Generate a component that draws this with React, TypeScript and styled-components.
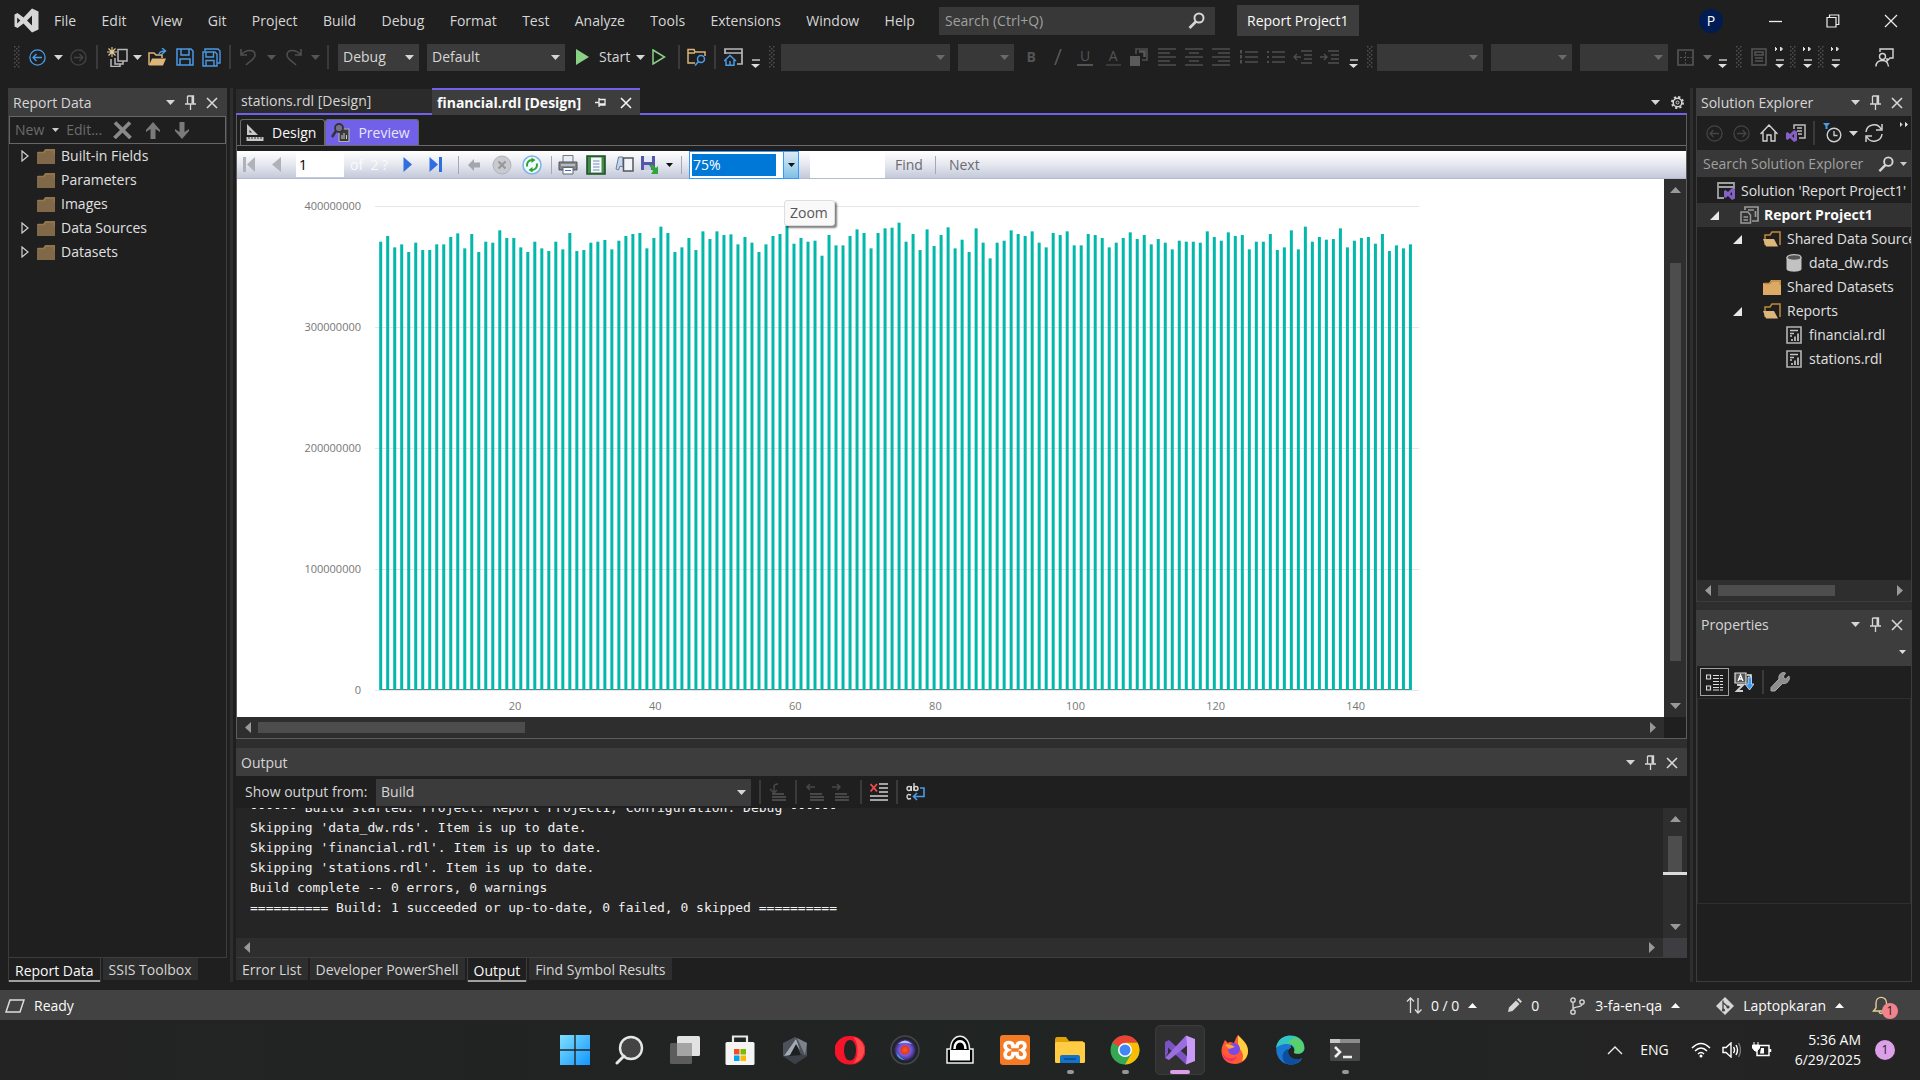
import React from 'react';
import styled, { createGlobalStyle, css } from 'styled-components';

const C = {
  bg: '#1f1f1f',
  header: '#3d3d3d',
  field: '#383838',
  line: '#3d3d3d',
  soft: '#2e2e2e',
  text: '#d6d6d6',
  purple: '#7160e8',
  teal: '#01b8aa',
};

const GlobalStyle = createGlobalStyle`
  * { box-sizing: border-box; }
  body { margin: 0; background: ${C.bg}; color: ${C.text}; font: 14px/20px "Open Sans", "Noto Sans", sans-serif; overflow: hidden; }
  button, input, select { font: inherit; color: inherit; margin: 0; padding: 0; border: 0; background: none; outline: 0; border-radius: 0; }
  svg { display: block; flex: none; }
`;

/* ---------- shared parts ---------- */

const Svg = styled.svg.attrs({ fill: 'none' })``;

const Glyph = ({ w = 18, h = w, vb = `0 0 ${w} ${h}`, children }: { w?: number; h?: number; vb?: string; children?: React.ReactNode }) => (
  <Svg width={w} height={h} viewBox={vb} aria-hidden>{children}</Svg>
);

const Caret = ({ c = C.text, up = false }: { c?: string; up?: boolean }) => (
  <Glyph w={9} h={5}><path d={up ? 'M0 5 L4.5 0 L9 5Z' : 'M0 0 H9 L4.5 5Z'} fill={c} /></Glyph>
);
const SmallCaret = ({ c = '#ddd' }: { c?: string }) => (
  <Glyph w={7} h={4}><path d="M0 0 H7 L3.5 4Z" fill={c} /></Glyph>
);

const Tool = styled.button<{ $w?: number }>`
  flex: none;
  display: flex;
  align-items: center;
  justify-content: center;
  width: ${(p) => p.$w ?? 27}px;
  height: 28px;
`;

const Divider = styled.span<{ $w?: number; $c?: string }>`
  flex: none;
  width: ${(p) => p.$w ?? 12}px;
  height: 24px;
  display: flex;
  justify-content: center;
  &::before { content: ''; width: 2px; background: ${(p) => p.$c ?? '#3a3a3a'}; }
`;

const ReportDivider = styled(Divider)`
  height: 18px;
  &::before { width: 1px; }
`;

const GripBox = styled.span`
  flex: none;
  width: 14px;
  display: flex;
  justify-content: center;
`;
const Grip = () => (
  <GripBox>
    <Glyph w={6} h={22}>
      {[0, 4, 8, 12, 16, 20].map((y) => <g key={y} fill="#4f4f4f"><rect x="0" y={y} width="1.5" height="1.5" /><rect x="4" y={y} width="1.5" height="1.5" /><rect x="2" y={y + 2} width="1.5" height="1.5" /></g>)}
    </Glyph>
  </GripBox>
);

const OverflowMark = ({ more = false, w = 14 }: { more?: boolean; w?: number }) => (
  <Tool $w={w} aria-label="Toolbar options">
    <Glyph w={9} h={22}>
      {more && <path d="M0 1 l2 2 l-2 2z M5.5 1 l2 2 l-2 2z" fill="#ddd" stroke="#ddd" />}
      <path d="M1 14 H9" stroke="#ddd" strokeWidth="1.3" /><path d="M0 18 H9 L4.5 22Z" fill="#ddd" />
    </Glyph>
  </Tool>
);

const ComboBox = styled.label<{ $w: number; $ml?: number; $off?: boolean }>`
  flex: none;
  display: grid;
  align-items: center;
  width: ${(p) => p.$w}px;
  height: 27px;
  margin-left: ${(p) => p.$ml ?? 8}px;
  background: ${(p) => (p.$off ? '#383838' : '#3b3b3b')};
  & > * { grid-area: 1 / 1; }
  & > svg { justify-self: end; margin-right: 5px; pointer-events: none; }
`;
const PlainSelect = styled.select`
  appearance: none;
  width: 100%;
  height: 100%;
  padding: 0 5px;
`;
const Combo = ({ w, ml, off, label, value = '' }: { w: number; ml?: number; off?: boolean; label: string; value?: string }) => (
  <ComboBox $w={w} $ml={ml} $off={off}>
    <PlainSelect aria-label={label} disabled={off} defaultValue={value}><option value={value}>{value}</option></PlainSelect>
    <Caret c={off ? '#6a6a6a' : C.text} />
  </ComboBox>
);

const Pin = () => (
  <Glyph w={11} h={15}><path d="M2.5 1 H8.5 V8.5 M2.5 1 V8.5 M0 9 H11 M5.5 9 V15" stroke={C.text} strokeWidth="1.3" /><path d="M6.5 1 H8.5 V8.5 H6.5Z" fill={C.text} /></Glyph>
);
const Cross = ({ c = C.text, s = 12 }: { c?: string; s?: number }) => (
  <Glyph w={s} vb="0 0 12 12"><path d="M1 1 L11 11 M11 1 L1 11" stroke={c} strokeWidth="1.6" /></Glyph>
);

const PanelHead = styled.header`
  flex: none;
  display: flex;
  align-items: center;
  height: 28px;
  padding: 1px 5px 0;
  background: ${C.header};
`;
const PanelTitle = styled.h2`
  flex: 1;
  margin: 0;
  font-size: 14px;
  font-weight: 400;
  white-space: nowrap;
`;
const Header = ({ title }: { title: string }) => (
  <PanelHead>
    <PanelTitle>{title}</PanelTitle>
    <Tool $w={20} aria-label="Window position"><Caret /></Tool>
    <Tool $w={21} aria-label="Auto hide"><Pin /></Tool>
    <Tool $w={21} aria-label="Close"><Cross /></Tool>
  </PanelHead>
);

const Splitter = styled.div<{ $flat?: number }>`
  flex: none;
  background: #2e2e2e;
  ${(p) => (p.$flat ? css`height: ${p.$flat}px;` : css`width: 3px; margin: 0 3px;`)}
`;

/* ---------- scroll bars ---------- */

const Track = styled.div<{ $side?: boolean; $size: number }>`
  flex: none;
  display: flex;
  align-items: center;
  background: ${C.soft};
  padding: ${(p) => (p.$side ? '8px 0' : '0 8px')};
  flex-direction: ${(p) => (p.$side ? 'column' : 'row')};
  ${(p) => (p.$side ? css`width: ${p.$size}px;` : css`height: ${p.$size}px;`)}
`;
const Rail = styled.div<{ $side?: boolean }>`
  flex: 1;
  display: flex;
  flex-direction: ${(p) => (p.$side ? 'column' : 'row')};
  align-items: center;
  align-self: stretch;
  min-width: 0;
  min-height: 0;
`;
const Space = styled.span<{ $n: number }>`flex: ${(p) => p.$n} 1 0;`;
const Thumb = styled.span<{ $n: number; $side?: boolean; $t?: number }>`
  flex: ${(p) => p.$n} 1 0;
  background: #4d4d4d;
  ${(p) => (p.$side ? css`width: ${p.$t ?? 11}px;` : css`height: 11px;`)}
`;
const Arrow = ({ d }: { d: 'l' | 'r' | 'u' | 'd' }) => {
  const side = d === 'l' || d === 'r';
  const path = { l: 'M6 0 V11 L0 5.5Z', r: 'M0 0 V11 L6 5.5Z', u: 'M0 6 H11 L5.5 0Z', d: 'M0 0 H11 L5.5 6Z' }[d];
  return <Glyph w={side ? 6 : 11} h={side ? 11 : 6}><path d={path} fill="#999" /></Glyph>;
};

/* ---------- title bar ---------- */

const Page = styled.div`
  display: flex;
  flex-direction: column;
  height: 100vh;
  overflow: hidden;
`;
const TitleBar = styled.header`
  flex: none;
  display: flex;
  align-items: center;
  height: 41px;
  padding-left: 14px;
`;
const Menu = styled.nav`
  display: flex;
  flex: none;
  justify-content: space-between;
  width: 861px;
  margin: 0 24px 0 15px;
`;
const MenuItem = styled.button`white-space: nowrap;`;
const SearchBox = styled.label`
  display: flex;
  align-items: center;
  flex: none;
  width: 276px;
  height: 28px;
  padding: 0 10px 0 6px;
  background: ${C.field};
  & input { flex: 1; min-width: 0; }
  & input::placeholder { color: #a0a0a0; opacity: 1; }
`;
const Magnifier = ({ s = 17 }: { s?: number }) => (
  <Glyph w={s} vb="0 0 17 17"><circle cx="11" cy="6" r="4.5" stroke={C.text} strokeWidth="2" /><path d="M8 9.5 L1.5 16" stroke={C.text} strokeWidth="2.6" /></Glyph>
);
const ProjectChip = styled.h1`
  margin: 0 0 0 22px;
  padding: 6px 10px 5px;
  height: 31px;
  background: ${C.header};
  color: #fafafa;
  font-size: 14px;
  font-weight: 400;
  white-space: nowrap;
`;
const WindowButtons = styled.div`
  margin-left: auto;
  display: flex;
  align-items: center;
`;
const Avatar = styled.button`
  width: 24px;
  height: 24px;
  margin-right: 23px;
  border-radius: 50%;
  background: #001c52;
  color: #fff;
`;

const VsLogo = () => (
  <Glyph w={25} h={25}><path fillRule="evenodd" d="M18 0.5 L24.5 3.5 V21.5 L18 24.5 L9.5 15.5 L3.5 20 L0.5 18.5 V6.5 L3.5 5 L9.5 9.5Z M18 7.5 L13 12.5 L18 17.5Z M3.2 9.5 V15.5 L6.3 12.5Z" fill="#d6d6d6" /></Glyph>
);

const MENU = ['File', 'Edit', 'View', 'Git', 'Project', 'Build', 'Debug', 'Format', 'Test', 'Analyze', 'Tools', 'Extensions', 'Window', 'Help'];

const Title = () => (
  <TitleBar>
    <VsLogo />
    <Menu>{MENU.map((m) => <MenuItem key={m}>{m}</MenuItem>)}</Menu>
    <SearchBox><input aria-label="Search" placeholder="Search (Ctrl+Q)" /><Magnifier /></SearchBox>
    <ProjectChip>Report Project1</ProjectChip>
    <WindowButtons>
      <Avatar>P</Avatar>
      <Tool $w={58} aria-label="Minimize"><Glyph w={13}><path d="M0 7.5 H13" stroke="#eee" strokeWidth="1.3" /></Glyph></Tool>
      <Tool $w={58} aria-label="Restore"><Glyph w={14}><path d="M1 3.5 H10 V13 H1Z M3.5 3.5 V1 H12.8 V10.5 H10" stroke="#eee" strokeWidth="1.2" /></Glyph></Tool>
      <Tool $w={58} aria-label="Close window"><Glyph w={14}><path d="M1 1 L13 13 M13 1 L1 13" stroke="#eee" strokeWidth="1.2" /></Glyph></Tool>
    </WindowButtons>
  </TitleBar>
);

/* ---------- main toolbar ---------- */

const ToolRow = styled.div`
  flex: none;
  display: flex;
  align-items: center;
  height: 32px;
  padding-left: 10px;
`;
const StartLabel = styled.button`
  flex: none;
  display: flex;
  align-items: center;
  gap: 10px;
  padding-left: 10px;
  & svg:last-child { margin-left: -4px; }
`;
const Push = styled.span`margin-left: auto;`;

const NavArrow = ({ c, right = false, s = 17 }: { c: string; right?: boolean; s?: number }) => (
  <Glyph w={s} vb="0 0 17 17"><circle cx="8.5" cy="8.5" r="7.6" stroke={c} strokeWidth="1.3" /><path d={right ? 'M4 8.5 H13 M9.5 5 L13 8.5 L9.5 12' : 'M13 8.5 H4 M7.5 5 L4 8.5 L7.5 12'} stroke={c} strokeWidth="1.3" /></Glyph>
);
const Lines = ({ rows }: { rows: number[][] }) => (
  <Glyph w={19} h={18}>{rows.map(([a, b], i) => <path key={i} d={`M${a} ${1 + i * 4} H${b}`} stroke="#4f4f4f" strokeWidth="1.5" />)}</Glyph>
);
const ListLines = ({ dots = false }: { dots?: boolean }) => (
  <Glyph w={19} h={14}>{[2, 7, 12].map((y) => <g key={y}><path d={`M6 ${y} H19`} stroke="#4f4f4f" strokeWidth="1.5" /><rect x="1" y={y - (dots ? 1 : 2)} width="2" height={dots ? 2 : 3.5} fill="#4f4f4f" /></g>)}</Glyph>
);
const Indent = ({ right = false }: { right?: boolean }) => (
  <Glyph w={19} h={14}><path d="M8 1 H19 M11 5 H19 M11 9 H19 M8 13 H19" stroke="#4f4f4f" strokeWidth="1.5" /><path d={right ? 'M0 7 H7 M4 4 L7 7 L4 10' : 'M8 7 H1 M4 4 L1 7 L4 10'} stroke="#4f4f4f" strokeWidth="1.3" /></Glyph>
);
const Letter = styled.span<{ $k: 'b' | 'u' | 'a' }>`
  color: #545454;
  line-height: 16px;
  ${(p) => p.$k === 'b' && css`font-weight: 700;`}
  ${(p) => p.$k !== 'b' && css`padding: 0 3px; border-bottom: 2px solid ${p.$k === 'a' ? '#3a3a3a' : '#545454'};`}
`;

const MainToolbar = () => (
  <ToolRow>
    <Grip />
    <Tool $w={26} aria-label="Back"><NavArrow c="#4a9be8" /></Tool>
    <Tool $w={16} aria-label="Back history"><Caret /></Tool>
    <Tool $w={24} aria-label="Forward"><NavArrow c="#444" right /></Tool>
    <Divider $w={14} />
    <Tool $w={26} aria-label="New project">
      <Glyph w={21} h={20}><path d="M5 0 V10 M0 5 H10 M1.5 1.5 L8.5 8.5 M8.5 1.5 L1.5 8.5" stroke="#e8cf98" strokeWidth="1.1" /><path d="M11 2.5 H20 V14 H11Z M8 11 V17 H16 V14 M4 12 V19.5 H13 V17" stroke="#b8b8b8" strokeWidth="1.5" /></Glyph>
    </Tool>
    <Tool $w={14} aria-label="New options"><Caret /></Tool>
    <Tool aria-label="Open">
      <Glyph w={19} h={19}><path d="M1 17 V5 H6 L8 7 H14 V10" stroke="#dcb679" strokeWidth="1.5" /><path d="M1 17.5 L4 10.5 H18 L15 17.5Z" fill="#dcb679" /><path d="M11 7 Q11 3 17 3 M14 0 L17.5 3 L14 6" stroke="#4a9be8" strokeWidth="1.5" /></Glyph>
    </Tool>
    <Tool aria-label="Save"><Glyph><path d="M1 1 H15 L17 3 V17 H1Z M5 1 V7 H13 V1 M4 17 V11 H14 V17" stroke="#4a9be8" strokeWidth="1.5" /></Glyph></Tool>
    <Tool $w={26} aria-label="Save all"><Glyph w={19}><path d="M3 3 V1 H16 L18 3 V15 H15.5" stroke="#4a9be8" strokeWidth="1.4" /><path d="M1 4 H13 L15 6 V18 H1Z M4 4 V9 H11.5 V4 M4 18 V12.5 H12 V18" stroke="#4a9be8" strokeWidth="1.4" /></Glyph></Tool>
    <Divider />
    <Tool $w={24} aria-label="Undo"><Glyph w={17} h={18}><path d="M1 1 V7 H7 M1 7 C6 1 15 1 15 7 C15 11 10 13 6 17" stroke="#4f4f4f" strokeWidth="1.6" /></Glyph></Tool>
    <Tool $w={22} aria-label="Undo history"><Caret c="#555" /></Tool>
    <Tool $w={22} aria-label="Redo"><Glyph w={17} h={18}><path d="M16 1 V7 H10 M16 7 C11 1 2 1 2 7 C2 11 7 13 11 17" stroke="#4f4f4f" strokeWidth="1.6" /></Glyph></Tool>
    <Tool $w={22} aria-label="Redo history"><Caret c="#555" /></Tool>
    <Divider $w={4} />
    <Combo w={81} ml={8} label="Solution configuration" value="Debug" />
    <Combo w={138} label="Solution platform" value="Default" />
    <StartLabel><Glyph w={14} h={16}><path d="M1 0 L14 8 L1 16Z" fill="#89d185" /></Glyph>Start<Caret /></StartLabel>
    <Tool $w={28} aria-label="Start without debugging"><Glyph w={14} h={16}><path d="M1 1 L12.5 8 L1 15Z" stroke="#89d185" strokeWidth="1.5" /></Glyph></Tool>
    <Divider />
    <Tool $w={24} aria-label="Find in files"><Glyph w={20} h={18}><path d="M8 15 H1 V1.5 H7 L8 4 H18 V8 M1 5 H8" stroke="#dcb679" strokeWidth="1.5" /><circle cx="14" cy="11" r="3.5" stroke="#4a9be8" strokeWidth="1.5" /><path d="M11.5 13.5 L8 17.5" stroke="#4a9be8" strokeWidth="1.6" /></Glyph></Tool>
    <Divider />
    <Tool $w={24} aria-label="Start window"><Glyph w={19} h={18}><path d="M1 6 V1 H18 V16 H13 M1 5 H18" stroke="#b8b8b8" strokeWidth="1.7" /><path d="M0 13 L6 7.5 L12 13 M2 12 V17.3 H10 V12 M6 17 V13" stroke="#4a9be8" strokeWidth="1.5" /></Glyph></Tool>
    <OverflowMark w={20} />
    <Grip />
    <Combo w={169} ml={2} off label="Font name" />
    <Combo w={56} off label="Font size" />
    <Tool $w={34} aria-label="Bold"><Letter $k="b">B</Letter></Tool>
    <Tool $w={20} aria-label="Italic"><Glyph w={8} h={16}><path d="M7 0 L1 16" stroke="#545454" strokeWidth="1.8" /></Glyph></Tool>
    <Tool $w={34} aria-label="Underline"><Letter $k="u">U</Letter></Tool>
    <Tool $w={22} aria-label="Foreground color"><Letter $k="a">A</Letter></Tool>
    <Tool $w={30} aria-label="Background color"><Glyph w={18}><path d="M0 8 H10 V18 H0Z" fill="#5a5a5a" /><path d="M6 6 V1 H17 V12 H12" stroke="#4f4f4f" strokeWidth="1.6" /><path d="M9 3.5 H14.5 V9" stroke="#5a5a5a" strokeWidth="2.5" /></Glyph></Tool>
    <Tool aria-label="Align left"><Lines rows={[[0, 18], [0, 12], [0, 18], [0, 12], [0, 18]]} /></Tool>
    <Tool aria-label="Align center"><Lines rows={[[0, 18], [4, 14], [0, 18], [4, 14], [0, 18]]} /></Tool>
    <Tool aria-label="Align right"><Lines rows={[[0, 18], [6, 18], [0, 18], [6, 18], [0, 18]]} /></Tool>
    <Tool aria-label="Numbered list"><ListLines /></Tool>
    <Tool aria-label="Bulleted list"><ListLines dots /></Tool>
    <Tool aria-label="Decrease indent"><Indent /></Tool>
    <Tool aria-label="Increase indent"><Indent right /></Tool>
    <OverflowMark w={20} />
    <Grip />
    <Combo w={106} ml={0} off label="Border style" />
    <Combo w={81} off label="Border width" />
    <Combo w={88} off label="Border color" />
    <Tool $w={34} aria-label="Borders"><Glyph w={17}><path d="M1 1 H16 V16 H1Z" stroke="#565656" strokeWidth="1.6" /><path d="M8.5 3 V15 M3 8.5 H15" stroke="#565656" strokeDasharray="2 1.5" /></Glyph></Tool>
    <Tool $w={10} aria-label="Border options"><Caret c="#6a6a6a" /></Tool>
    <OverflowMark w={20} />
    <Grip />
    <Tool $w={26} aria-label="Report properties"><Glyph w={16} h={18}><path d="M1 1 H15 V17 H1Z M4 4 H12 V7 H4Z M4 10 H12 M4 13 H12" stroke="#565656" strokeWidth="1.5" /></Glyph></Tool>
    <OverflowMark more /><Grip /><OverflowMark more /><Grip /><OverflowMark more />
    <Push />
    <Tool $w={72} aria-label="Feedback"><Glyph w={19} h={19}><path d="M5 4 V1 H18 V10 H15 L12 13 V10" stroke="#d6d6d6" strokeWidth="1.4" /><circle cx="7.5" cy="8.5" r="3" stroke="#d6d6d6" strokeWidth="1.4" /><path d="M1 18.5 C1 14 4 12.5 7.5 12.5 C11 12.5 13 14.5 13.5 18.5" stroke="#d6d6d6" strokeWidth="1.4" /></Glyph></Tool>
  </ToolRow>
);

/* ---------- left panel ---------- */

const Workspace = styled.main`
  flex: 1;
  min-height: 0;
  display: flex;
  padding: 15px 8px 8px;
`;
const SidePanel = styled.section<{ $w: number }>`
  flex: none;
  display: flex;
  flex-direction: column;
  width: ${(p) => p.$w}px;
  min-height: 0;
`;
const PanelBody = styled.div`
  flex: 1;
  min-height: 0;
  display: flex;
  flex-direction: column;
  border: solid ${C.line};
  border-width: 0 1px 1px;
`;
const DataBar = styled.div`
  flex: none;
  display: flex;
  align-items: center;
  height: 28px;
  border: 1px solid #666;
  padding-left: 5px;
  color: #6c6c6c;
`;
const DataText = styled.button`flex: none; white-space: nowrap;`;
const TreeList = styled.ul`
  list-style: none;
  margin: 0;
  padding: 0;
  flex: 1;
  min-height: 0;
  overflow: hidden;
`;
const NodeList = styled(TreeList)`padding-top: 2px;`;
const TreeRow = styled.li<{ $indent: number; $on?: boolean }>`
  display: grid;
  grid-template-columns: 20px 20px 1fr;
  column-gap: 1px;
  align-items: center;
  height: 24px;
  padding-left: ${(p) => p.$indent}px;
  white-space: nowrap;
  overflow: hidden;
  background: ${(p) => (p.$on ? '#323232' : 'none')};
  font-weight: ${(p) => (p.$on ? 700 : 400)};
  color: ${(p) => (p.$on ? '#fafafa' : '#e0e0e0')};
  & > svg { justify-self: center; }
  & > :last-child { padding-left: 4px; }
`;
const Closed = () => <Glyph w={8} h={12}><path d="M1 1 L7 6 L1 11Z" stroke="#d0d0d0" strokeWidth="1.2" /></Glyph>;
const Open = () => <Glyph w={9} h={9}><path d="M9 0 V9 H0Z" fill="#e8e8e8" /></Glyph>;
const Folder = ({ c, edge }: { c: string; edge: string }) => (
  <Glyph w={18} h={15}><path d="M0 3 H6 L8 0 H18 V15 H0Z" fill={c} /><path d="M1 3.5 H7 L9 1 H17.3 V5" stroke={edge} strokeWidth="1.4" /></Glyph>
);
const BottomTabs = styled.div`
  flex: none;
  display: flex;
  gap: 2px;
  height: 24px;
`;
const BottomTab = styled.button<{ $on?: boolean }>`
  padding: 1px 6px 0;
  height: ${(p) => (p.$on ? 24 : 22)}px;
  background: ${(p) => (p.$on ? C.bg : '#2e2e2e')};
  color: ${(p) => (p.$on ? '#fafafa' : C.text)};
  white-space: nowrap;
  ${(p) => p.$on && css`border: solid ${C.line}; border-width: 0 1px; box-shadow: inset 0 -2px 0 #a0a0a0;`}
`;

const FIELDS: [string, boolean][] = [['Built-in Fields', true], ['Parameters', false], ['Images', false], ['Data Sources', true], ['Datasets', true]];

const ReportData = () => (
  <SidePanel $w={219}>
    <Header title="Report Data" />
    <PanelBody>
      <DataBar>
        <DataText>New</DataText>
        <Tool $w={22} aria-label="New menu"><SmallCaret c="#ccc" /></Tool>
        <DataText>Edit...</DataText>
        <Tool $w={40} aria-label="Delete"><Glyph w={19} h={18}><path d="M2 1.5 L17.5 17 M17 1.5 L1.5 17" stroke="#8a8a8a" strokeWidth="3.8" /></Glyph></Tool>
        <Tool $w={22} aria-label="Move up"><Glyph w={14} h={17}><path d="M7 0 L14 8 V10 L9.5 7 V17 H4.5 V7 L0 10 V8Z" fill="#7a7a7a" /></Glyph></Tool>
        <Tool $w={36} aria-label="Move down"><Glyph w={14} h={17}><path d="M7 17 L14 9 V7 L9.5 10 V0 H4.5 V10 L0 7 V9Z" fill="#7a7a7a" /></Glyph></Tool>
      </DataBar>
      <TreeList>
        {FIELDS.map(([name, kids]) => (
          <TreeRow key={name} $indent={6}>{kids ? <Closed /> : <i />}<Folder c="#806848" edge="#96784a" /><span>{name}</span></TreeRow>
        ))}
      </TreeList>
    </PanelBody>
    <BottomTabs><BottomTab $on>Report Data</BottomTab><BottomTab>SSIS Toolbox</BottomTab></BottomTabs>
  </SidePanel>
);

/* ---------- documents ---------- */

const Center = styled.section`
  flex: 1;
  min-width: 0;
  min-height: 0;
  display: flex;
  flex-direction: column;
`;
const DocTabs = styled.div`
  flex: none;
  display: flex;
  align-items: flex-start;
  height: 27px;
  border-bottom: 2px solid ${C.purple};
`;
const DocTab = styled.div<{ $on?: boolean }>`
  flex: none;
  display: flex;
  align-items: center;
  height: ${(p) => (p.$on ? 27 : 25)}px;
  width: ${(p) => (p.$on ? 208 : 196)}px;
  padding: 0 0 0 5px;
  background: ${(p) => (p.$on ? C.header : '#2b2b2b')};
  color: ${(p) => (p.$on ? '#fafafa' : C.text)};
  font-weight: ${(p) => (p.$on ? 700 : 400)};
  border-top: ${(p) => (p.$on ? `2px solid ${C.purple}` : `1px solid ${C.bg}`)};
  & > button:first-child { flex: 1; text-align: left; white-space: nowrap; font-weight: inherit; }
`;
const Frame = styled.div`
  flex: 1;
  min-height: 0;
  display: flex;
  flex-direction: column;
  border: solid #5c5c5c;
  border-width: 0 1px 1px;
`;
const ViewTabs = styled.div`
  flex: none;
  display: flex;
  height: 31px;
  padding: 4px 0 0 3px;
  margin-bottom: 5px;
  border-bottom: 1px solid #6a6a6a;
`;
const ViewTab = styled.button<{ $on?: boolean }>`
  display: flex;
  align-items: center;
  gap: 8px;
  padding: 0 8px 0 5px;
  border: 1px solid #6a6a6a;
  border-bottom: 0;
  border-radius: 3px 3px 0 0;
  color: ${(p) => (p.$on ? '#e8e6fb' : '#fafafa')};
  background: ${(p) => (p.$on ? C.purple : C.bg)};
`;
const ReportBar = styled.div`
  flex: none;
  position: relative;
  display: flex;
  align-items: center;
  height: 28px;
  background: linear-gradient(#ffffff, #e6e8f0 50%, #c4c9da);
  border-bottom: 1px solid #b4bbd0;
`;
const PageInput = styled.input`
  flex: none;
  width: 48px;
  height: 25px;
  margin-left: 4px;
  padding-left: 3px;
  background: #fff;
  color: #000;
`;
const PageCount = styled.span`
  flex: none;
  width: 49px;
  padding-left: 6px;
  color: #fafafa;
  white-space: pre;
`;
const ZoomCombo = styled.label`
  flex: none;
  display: flex;
  width: 110px;
  height: 28px;
  border: 1px solid #3399ff;
  background: #fff;
  & input { width: 84px; height: 22px; margin: 2px 7px 2px 2px; padding-left: 1px; background: #0078d7; color: #fff; }
  & button { flex: 1; display: flex; align-items: center; justify-content: center; border-left: 1px solid #3399ff; background: linear-gradient(#dcebf5, #a5d3ec 60%, #7fbfe2); }
`;
const FindInput = styled.input`
  flex: none;
  width: 75px;
  height: 26px;
  margin: 0 10px 0 11px;
  background: #fff;
  color: #000;
`;
const FindLink = styled.button`color: #6b6b70;`;
const Tip = styled.span`
  position: absolute;
  left: 547px;
  top: 49px;
  padding: 2px 6px 2px 5px;
  border: 1px solid #dedede;
  border-radius: 3px;
  background: #f9f9f9;
  color: #575757;
  box-shadow: 2px 2px 2px rgba(0, 0, 0, 0.5);
  z-index: 2;
`;
const CanvasRow = styled.div`
  flex: 1;
  min-height: 0;
  display: flex;
  background: #fff;
`;
const Sheet = styled.div`
  flex: 1;
  min-width: 0;
  overflow: hidden;
`;
const ScrollRow = styled.div`
  flex: none;
  display: flex;
  & > :first-child { flex: 1; }
`;
const Corner = styled.span<{ $w: number; $c: string }>`
  flex: none;
  width: ${(p) => p.$w}px;
  background: ${(p) => p.$c};
`;
const AxisText = styled.text`
  font: 11px "Open Sans", "Noto Sans", sans-serif;
  fill: #777;
`;

/* Drop of each bar below the 400M gridline, 0.2757M per step. */
const DROPS = [
  107, 90, 124, 115, 138, 110, 132, 132, 115, 115, 93, 82, 127, 84, 138, 107, 110, 73, 96, 96, 124, 138, 107, 127, 135, 107, 130, 81, 135, 132,
  110, 107, 102, 130, 104, 90, 84, 81, 127, 96, 62, 81, 138, 124, 96, 132, 76, 99, 76, 87, 85, 115, 93, 110, 138, 115, 90, 84, 60, 113,
  96, 107, 104, 149, 87, 118, 118, 90, 70, 81, 127, 81, 67, 65, 50, 107, 84, 132, 70, 120, 87, 64, 127, 101, 138, 67, 110, 157, 110, 104,
  73, 84, 90, 76, 110, 124, 81, 87, 76, 118, 118, 84, 87, 96, 124, 110, 96, 79, 99, 87, 115, 99, 110, 130, 104, 107, 107, 110, 76, 93,
  104, 79, 90, 87, 130, 107, 107, 84, 132, 124, 73, 130, 62, 107, 93, 101, 99, 67, 124, 104, 96, 93, 113, 84, 135, 118, 127, 115,
];
const VALUES = DROPS.map((d) => 400 - d * 0.2757);
const BASE = 511;
const PLOT = 484;
const FIRST = 144;
const STEP = 7.005;

const Chart = () => (
  <Svg width={1220} height={538} role="img" aria-label="Column chart">
    {[0, 1, 2, 3, 4].map((n) => {
      const y = BASE - (PLOT / 4) * n;
      return (
        <g key={n}>
          <rect x={138} y={y} width={1044} height={1} fill="#e6e6e6" />
          <AxisText x={124} y={y + 4} textAnchor="end">{n * 100000000}</AxisText>
        </g>
      );
    })}
    <path d={`M${FIRST - 1} ${BASE - 0.5} H${FIRST + STEP * 147}`} stroke="#777" />
    {VALUES.map((v, i) => {
      const h = (v / 400) * PLOT;
      return <rect key={i} x={FIRST - 1.8 + i * STEP} y={BASE - h} width={3} height={h} fill={C.teal} />;
    })}
    {[20, 40, 60, 80, 100, 120, 140].map((n) => (
      <AxisText key={n} x={FIRST + 1 + STEP * (n - 1)} y={BASE + 20} textAnchor="middle">{n}</AxisText>
    ))}
  </Svg>
);

const ReportToolbar = () => (
  <ReportBar>
    <Tool $w={24} aria-label="First page"><Glyph w={14} h={15}><path d="M1 0 H4 V15 H1Z M13 0 V15 L5 7.5Z" fill="#b0b2ba" /></Glyph></Tool>
    <Tool $w={31} aria-label="Previous page"><Glyph w={9} h={15}><path d="M9 0 V15 L0 7.5Z" fill="#b0b2ba" /></Glyph></Tool>
    <PageInput aria-label="Page" defaultValue="1" />
    <PageCount>{'of  2 ?'}</PageCount>
    <Tool $w={28} aria-label="Next page"><Glyph w={9} h={15}><path d="M0.5 0 V15 L9 7.5Z" fill="#2f6fe0" /></Glyph></Tool>
    <Tool $w={30} aria-label="Last page"><Glyph w={14} h={15}><path d="M0.5 0 V15 L9 7.5Z M10 0 H13 V15 H10Z" fill="#2f6fe0" /></Glyph></Tool>
    <ReportDivider $w={14} $c="#a4a8b8" />
    <Tool $w={18} aria-label="Back to parent"><Glyph w={13} h={12}><path d="M0 6 L6 0 V3.5 H12 V8.5 H6 V12Z" fill="#a4a6ae" /></Glyph></Tool>
    <Tool $w={38} aria-label="Stop"><Glyph w={20}><circle cx="10" cy="10" r="9" fill="#c9cad0" stroke="#b0b2b8" /><path d="M6.5 6.5 L13.5 13.5 M13.5 6.5 L6.5 13.5" stroke="#96989e" strokeWidth="2.2" /></Glyph></Tool>
    <Tool $w={22} aria-label="Refresh"><Glyph w={20}><circle cx="10" cy="10" r="9" fill="#f4f9ff" stroke="#7fb4e4" strokeWidth="1.6" /><path d="M5.2 11.5 A5 5 0 0 1 10 5 M14.800 8.500 A5 5 0 0 1 10 15" stroke="#27a52c" strokeWidth="2" /><path d="M9.5 2.5 L13.5 5 L9.5 8Z M10.500 12 V17.500 L6.500 15Z" fill="#27a52c" /></Glyph></Tool>
    <ReportDivider $w={16} $c="#a4a8b8" />
    <Tool $w={18} aria-label="Print"><Glyph w={20}><path d="M5 0.5 H15 V8 H5Z" fill="#e8eef6" stroke="#777" /><path d="M1 7 H19 V15 H1Z" fill="#84878e" stroke="#4f5258" /><path d="M3 10 H17" stroke="#c9ccd2" strokeWidth="1.5" /><path d="M5 12.5 H15 V19 H5Z" fill="#fff" stroke="#666" /><path d="M7 15.5 H13" stroke="#2f6fe0" /></Glyph></Tool>
    <Tool $w={38} aria-label="Print layout"><Glyph w={20}><path d="M1 1 H19 V19 H1Z" fill="#438b4a" stroke="#1f4f26" strokeWidth="1.6" /><path d="M5 2.5 H15.5 V17.5 H5Z" fill="#f4f8ff" /><path d="M7 6 H13.5 M7 9 H13.5 M7 12 H13.5 M7 15 H13.5" stroke="#7689ae" /></Glyph></Tool>
    <Tool $w={20} aria-label="Page setup"><Glyph w={20} h={17}><path d="M1 13 L3.5 1 H8 V11 L5 10 L3.5 14Z" fill="#c3d7f0" stroke="#6c7c94" /><path d="M8.500 2 H18 V15 H8.500Z" fill="#f2f4f8" stroke="#54585f" strokeWidth="1.5" /></Glyph></Tool>
    <Tool $w={30} aria-label="Export"><Glyph w={20} h={19}><path d="M1 1 H15 V15 H1Z" fill="#5457a8" /><path d="M4 1 H12 V7 H4Z" fill="#e6e9f6" /><path d="M4 10 H11 V15 H4Z" fill="#c5c9e2" /><path d="M9 10 L13 10 L16 13 L18 11 V19 H11 L13 16Z" fill="#30a63a" /></Glyph></Tool>
    <Tool $w={8} aria-label="Export menu"><SmallCaret c="#111" /></Tool>
    <ReportDivider $w={16} $c="#a4a8b8" />
    <ZoomCombo><input aria-label="Zoom" defaultValue="75%" /><button aria-label="Zoom levels"><SmallCaret c="#111" /></button></ZoomCombo>
    <FindInput aria-label="Find text" />
    <FindLink>Find</FindLink>
    <ReportDivider $w={26} $c="#a4a8b8" />
    <FindLink>Next</FindLink>
    <Tip role="tooltip">Zoom</Tip>
  </ReportBar>
);

const Documents = () => (
  <>
    <DocTabs>
      <DocTab><button>stations.rdl [Design]</button></DocTab>
      <DocTab $on>
        <button>financial.rdl [Design]</button>
        <Tool $w={24} aria-label="Pin tab"><Glyph w={11} h={9}><path d="M0 4.5 H4 M4 0 V9 M4 1.5 H10 V7 H4 M4 6 H10" stroke="#eee" strokeWidth="1.3" /></Glyph></Tool>
        <Tool $w={28} aria-label="Close tab"><Cross c="#f4f4f4" /></Tool>
      </DocTab>
      <Push />
      <Tool $w={24} aria-label="Open documents"><Caret /></Tool>
      <Tool $w={20} aria-label="Tab options"><Glyph w={13}><circle cx="6.5" cy="6.5" r="4.3" stroke={C.text} strokeWidth="1.5" /><circle cx="6.5" cy="6.5" r="1.5" stroke={C.text} /><circle cx="6.5" cy="6.5" r="5.6" stroke={C.text} strokeWidth="1.8" strokeDasharray="2.2 2.2" /></Glyph></Tool>
    </DocTabs>
    <Frame>
      <ViewTabs>
        <ViewTab><Glyph w={18}><path fillRule="evenodd" d="M1 0 L12 11 H1Z M3.5 6 V8.5 H6Z" fill="#c8c8c8" /><path d="M0.5 13 H17.5 V17 H0.5Z" fill="#c8c8c8" /><path d="M3 13 V15 M6 13 V15 M9 13 V15 M12 13 V15 M15 13 V15" stroke="#333" /></Glyph>Design</ViewTab>
        <ViewTab $on><Glyph w={19} h={19}><path d="M8 6 H18 V18.5 H8Z" fill="#3a3a3a" stroke="#b0b0b0" strokeWidth="1.2" /><path d="M11 16 V12 M13 16 V10 M15.5 16 V12" stroke="#ccc" /><circle cx="8" cy="5" r="4" fill="#77718f" stroke="#333" strokeWidth="1.8" /><path d="M5 8 L1 14" stroke="#333" strokeWidth="2.5" /></Glyph>Preview</ViewTab>
      </ViewTabs>
      <ReportToolbar />
      <CanvasRow>
        <Sheet><Chart /></Sheet>
        <Track $side $size={22}><Arrow d="u" /><Rail $side><Space $n={70} /><Thumb $n={395} $side /><Space $n={42} /></Rail><Arrow d="d" /></Track>
      </CanvasRow>
      <ScrollRow>
        <Track $size={21}><Arrow d="l" /><Rail><Space $n={7} /><Thumb $n={267} /><Space $n={1126} /></Rail><Arrow d="r" /></Track>
        <Corner $w={22} $c={C.bg} />
      </ScrollRow>
    </Frame>
  </>
);

/* ---------- output ---------- */

const OutputBox = styled.section`
  flex: none;
  border-bottom: 1px solid ${C.line};
`;
const OutputBar = styled.div`
  display: flex;
  align-items: center;
  height: 32px;
  padding-left: 9px;
`;
const SourceLabel = styled.label`
  flex: none;
  width: 131px;
  white-space: nowrap;
`;
const OutputMain = styled.div`
  display: flex;
  height: 130px;
  background: #252526;
`;
const LogBox = styled.div`
  flex: 1;
  min-width: 0;
  overflow: hidden;
`;
const Log = styled.pre`
  margin: -10px 0 0 14px;
  font: 13px/20px "DejaVu Sans Mono", "Liberation Mono", monospace;
  color: #f0f0f0;
`;
const CaretLine = styled.span`
  flex: none;
  align-self: stretch;
  height: 3px;
  background: #dcdcdc;
`;
const SmallLines = ({ arrow }: { arrow: string }) => (
  <Glyph w={18} h={18}><path d="M4 11 H16 M4 14 H18 M4 17 H18" stroke="#484848" strokeWidth="1.8" /><path d={arrow} stroke="#484848" strokeWidth="1.5" /></Glyph>
);

const LOG = `------ Build started: Project: Report Project1, Configuration: Debug ------
Skipping 'data_dw.rds'. Item is up to date.
Skipping 'financial.rdl'. Item is up to date.
Skipping 'stations.rdl'. Item is up to date.
Build complete -- 0 errors, 0 warnings
========== Build: 1 succeeded or up-to-date, 0 failed, 0 skipped ==========`;

const Output = () => (
  <>
    <OutputBox>
      <Header title="Output" />
      <OutputBar>
        <SourceLabel htmlFor="source">Show output from:</SourceLabel>
        <ComboBox $w={375} $ml={0} as="div"><PlainSelect id="source" defaultValue="Build"><option>Build</option></PlainSelect><Caret /></ComboBox>
        <Divider $w={18} />
        <Tool $w={16} aria-label="Find message"><SmallLines arrow="M6 10 V4 Q6 1 10 1 M2 6 L6 10 L9 7" /></Tool>
        <Divider $w={22} />
        <Tool $w={16} aria-label="Previous message"><SmallLines arrow="M9 4 H1 M4 1 L1 4 L4 7" /></Tool>
        <Tool $w={34} aria-label="Next message"><SmallLines arrow="M1 4 H9 M6 1 L9 4 L6 7" /></Tool>
        <Divider $w={8} />
        <Tool aria-label="Clear all"><Glyph w={18} h={18}><path d="M9 1 H18 M9 5 H18 M9 9 H18 M0 13 H18 M0 17 H18" stroke="#cfcfcf" strokeWidth="1.6" /><path d="M0.5 1 L7 8.5 M7 1 L0.5 8.5" stroke="#f14c4c" strokeWidth="1.8" /></Glyph></Tool>
        <Divider $w={10} />
        <Tool aria-label="Word wrap"><Glyph w={19} h={18}><circle cx="3" cy="5.5" r="2" stroke="#d6d6d6" strokeWidth="1.4" /><path d="M5.3 3 V8 M8 0 V8" stroke="#d6d6d6" strokeWidth="1.4" /><circle cx="10" cy="5.5" r="2" stroke="#d6d6d6" strokeWidth="1.4" /><path d="M5 12 Q1 10.5 1 13.5 Q1 17 5 15.5" stroke="#d6d6d6" strokeWidth="1.4" /><path d="M14 5 H18 V13.5 H8 M11 10 L7.5 13.5 L11 17" stroke="#4a9be8" strokeWidth="1.6" /></Glyph></Tool>
      </OutputBar>
      <OutputMain>
        <LogBox><Log>{LOG}</Log></LogBox>
        <Track $side $size={24}><Arrow d="u" /><Rail $side><Space $n={14} /><Thumb $n={36} $side $t={14} /><CaretLine /><Space $n={50} /></Rail><Arrow d="d" /></Track>
      </OutputMain>
      <ScrollRow><Track $size={19}><Arrow d="l" /><Rail /><Arrow d="r" /></Track><Corner $w={24} $c="#3e3e42" /></ScrollRow>
    </OutputBox>
    <BottomTabs><BottomTab>Error List</BottomTab><BottomTab>Developer PowerShell</BottomTab><BottomTab $on>Output</BottomTab><BottomTab>Find Symbol Results</BottomTab></BottomTabs>
  </>
);

/* ---------- right column ---------- */

const RightColumn = styled.aside`
  flex: none;
  display: flex;
  flex-direction: column;
  width: 216px;
  min-height: 0;
`;
const Explorer = styled.section`
  flex: 1;
  min-height: 0;
  display: flex;
  flex-direction: column;
`;
const ExplorerBar = styled.div`
  flex: none;
  display: flex;
  align-items: center;
  height: 34px;
  padding-left: 4px;
`;
const ExplorerSearch = styled(SearchBox)`
  width: auto;
  height: 27px;
  gap: 6px;
  padding: 0 4px 0 6px;
`;
const Properties = styled.section`
  flex: none;
  display: flex;
  flex-direction: column;
  height: 372px;
`;
const PropCombo = styled(ComboBox)`
  width: auto;
  height: 28px;
  margin: 0;
  background: ${C.header};
`;
const PropBar = styled.div`
  flex: none;
  display: flex;
  align-items: center;
  height: 32px;
  padding-left: 3px;
`;
const Framed = styled(Tool)`border: 1px solid #a0a0a0;`;
const PropGrid = styled.div`
  flex: none;
  height: 206px;
  border: 1px solid ${C.soft};
`;
const PurpleVs = ({ x, y }: { x: number; y: number }) => (
  <path transform={`translate(${x} ${y})`} fillRule="evenodd" d="M8 0 L11 1.5 V10.5 L8 12 L4 8 L1.5 10 L0 9 V3 L1.5 2 L4 4Z M8 4 L6 6 L8 8Z" fill="#8661c5" />
);
const SolutionIcon = () => <Glyph w={19} h={18}><path d="M7 16 H1 V1 H17 V7 M1 5 H17" stroke="#a0a0a0" strokeWidth="1.8" /><PurpleVs x={7} y={6} /></Glyph>;
const ProjectIcon = () => <Glyph w={19} h={18}><path d="M5 4 V1 H18 V15 H12 M8 4 H14 M15.5 5 V11" stroke="#9a9a9a" strokeWidth="1.7" /><path d="M1 6 H8 L10.5 9 V17 H1Z M3.5 11 H8 M3.5 14 H8" stroke="#9a9a9a" strokeWidth="1.5" /></Glyph>;
const OpenFolder = () => <Glyph w={18} h={16}><path d="M2 14 V4 H7 L9 1 H17 V14" stroke="#c08a3e" strokeWidth="1.5" /><path d="M0 8 H11 L15 15.5 H3Z" fill="#dcb67a" /></Glyph>;
const Database = () => <Glyph w={16} h={18}><path d="M0.5 3 V15 C0.5 18.5 15.5 18.5 15.5 15 V3Z" fill="#c2c2c2" /><ellipse cx="8" cy="3.5" rx="7" ry="2.8" fill="#555" stroke="#c2c2c2" strokeWidth="1.2" /></Glyph>;
const ReportFile = () => <Glyph w={16} h={18}><path d="M1 1 H15 V17 H1Z" stroke="#b5b5b5" strokeWidth="1.6" /><path d="M4 4.5 H12 M4 7.5 H8 M4 10 H6 M6 15 V13 M9 15 V10.5 M12 15 V7.5" stroke="#c4c4c4" strokeWidth="1.7" /></Glyph>;

const NODES: { name: string; indent: number; icon: React.ReactNode; open?: boolean; on?: boolean }[] = [
  { name: "Solution 'Report Project1'", indent: 0, icon: <SolutionIcon /> },
  { name: 'Report Project1', indent: 11, icon: <ProjectIcon />, open: true, on: true },
  { name: 'Shared Data Sources', indent: 34, icon: <OpenFolder />, open: true },
  { name: 'data_dw.rds', indent: 56, icon: <Database /> },
  { name: 'Shared Datasets', indent: 34, icon: <Folder c="#dcaa66" edge="#c08a3e" /> },
  { name: 'Reports', indent: 34, icon: <OpenFolder />, open: true },
  { name: 'financial.rdl', indent: 56, icon: <ReportFile /> },
  { name: 'stations.rdl', indent: 56, icon: <ReportFile /> },
];

const NodeRow = styled(TreeRow)<{ $root?: boolean }>`
  grid-template-columns: ${(p) => (p.$root ? '18px' : '30px')} 20px 1fr;
  & > :first-child { justify-self: start; margin-left: 2px; }
`;

const Right = () => (
  <RightColumn>
    <Explorer>
      <Header title="Solution Explorer" />
      <PanelBody>
        <ExplorerBar>
          <Tool aria-label="Back"><NavArrow c="#444" /></Tool>
          <Tool aria-label="Forward"><NavArrow c="#444" right /></Tool>
          <Tool aria-label="Home"><Glyph w={18}><path d="M0.5 10 L9 1 L17.5 10 M3 8 V17 H7 V11 H11 V17 H15 V8" stroke="#d0d0d0" strokeWidth="1.4" /></Glyph></Tool>
          <Tool aria-label="Switch views"><Glyph w={20} h={18}><path d="M8 5 V1 H19 V14 H13 M11 4 H16 M11 7 H16 M12 10 H16" stroke="#bdbdbd" strokeWidth="1.5" /><PurpleVs x={0} y={6} /></Glyph></Tool>
          <Divider $w={10} />
          <Tool $w={26} aria-label="Pending changes"><Glyph w={19} h={20}><path d="M0 0 H7 L4.5 3 V6 H2.5 V3Z" fill="#4a9be8" /><circle cx="11" cy="12" r="6.8" stroke="#d0d0d0" strokeWidth="1.4" /><path d="M11 8 V12.5 H14.5" stroke="#d0d0d0" strokeWidth="1.3" /></Glyph></Tool>
          <Tool $w={16} aria-label="Filter options"><Caret /></Tool>
          <Tool $w={26} aria-label="Refresh"><Glyph w={18} h={18}><path d="M1 8 A8 8 0 0 1 16 5 M17 10 A8 8 0 0 1 2 13 M17 0 V6 H11 M1 18 V12 H7" stroke="#d0d0d0" strokeWidth="1.5" /></Glyph></Tool>
          <Push />
          <Tool $w={14} aria-label="More"><Glyph w={9} h={22}><path d="M0 0.5 l2 2 l-2 2z M5.5 0.5 l2 2 l-2 2z" fill="#ddd" stroke="#ddd" /></Glyph></Tool>
        </ExplorerBar>
        <ExplorerSearch><input aria-label="Search Solution Explorer" placeholder="Search Solution Explorer" /><Magnifier s={16} /><SmallCaret c="#ccc" /></ExplorerSearch>
        <NodeList>
          {NODES.map((n) => (
            <NodeRow key={n.name} $indent={n.indent} $on={n.on} $root={n.indent === 0}>
              {n.open ? <Open /> : <i />}{n.icon}<span>{n.name}</span>
            </NodeRow>
          ))}
        </NodeList>
        <Track $size={21}><Arrow d="l" /><Rail><Space $n={7} /><Thumb $n={118} /><Space $n={62} /></Rail><Arrow d="r" /></Track>
      </PanelBody>
    </Explorer>
    <Splitter $flat={8} />
    <Properties>
      <Header title="Properties" />
      <PanelBody>
        <PropCombo $w={0}><PlainSelect aria-label="Object" /><SmallCaret /></PropCombo>
        <PropBar>
          <Framed $w={29} aria-label="Categorized"><Glyph w={18} h={17}><path d="M0.5 1 H4.5 V5 H0.5Z M0.5 12 H4.5 V16 H0.5Z" stroke="#ddd" strokeWidth="1.2" /><path d="M7 1.5 H17 M7 4.5 H17 M7 7.5 H17 M7 10.5 H17 M7 13.5 H17 M7 16 H17" stroke="#ddd" strokeDasharray="6 1 3" /></Glyph></Framed>
          <Tool $w={30} aria-label="Alphabetical"><Glyph w={20} h={20}><path d="M1 1 H12 V11 H1Z" fill="#555" stroke="#e0e0e0" strokeWidth="1.2" /><path d="M4 9 L6.5 3 L9 9 M5 7 H8" stroke="#fff" strokeWidth="1.3" /><path d="M3 13 H9 L3 19 H9" stroke="#d0d0d0" strokeWidth="2" /><path d="M13 3 H17 V5" stroke="#eee" strokeWidth="1.5" /><path d="M14 5 H17.5 V12 H20 L15.5 18 L11 12 H14Z" fill="#3f9bea" stroke="#dcebff" strokeWidth=".8" /></Glyph></Tool>
          <Divider $w={8} />
          <Tool $w={26} aria-label="Property pages"><Glyph w={20} h={20}><path d="M19 4 L15.5 7 L13 5 L15.5 1 C12 -0.5 8 2.5 9 7 L1 15.5 V19 H5 L12.5 11.5 C17 12.5 20.5 8 19 4Z" fill="#8e8e8e" stroke="#aaa" /></Glyph></Tool>
        </PropBar>
        <PropGrid />
      </PanelBody>
    </Properties>
  </RightColumn>
);

/* ---------- status bar ---------- */

const Status = styled.footer`
  flex: none;
  display: flex;
  align-items: center;
  height: 30px;
  padding: 1px 22px 0 5px;
  background: #424242;
  color: #fafafa;
`;
const StatusItem = styled.button<{ $mr?: number }>`
  display: flex;
  align-items: center;
  gap: 9px;
  margin-right: ${(p) => p.$mr ?? 0}px;
  white-space: nowrap;
`;
const Bell = styled.button`
  position: relative;
  width: 26px;
  height: 26px;
  & > span { position: absolute; right: 0; bottom: 0; width: 16px; height: 16px; border-radius: 50%; background: #f1838d; color: #222; font-size: 12px; line-height: 16px; }
`;

const StatusBar = () => (
  <Status>
    <StatusItem><Glyph w={20} h={14}><path d="M5 1 H19 L15 13 H1Z" stroke="#ddd" strokeWidth="1.5" /></Glyph>Ready</StatusItem>
    <Push />
    <StatusItem $mr={30}><Glyph w={16} h={17}><path d="M4.5 16 V1 M1 4.5 L4.5 1 L8 4.5 M12 1 V16 M9 12.5 L12 16 L15.5 12.5" stroke="#ddd" strokeWidth="1.3" /></Glyph>0 / 0<Caret c="#fafafa" up /></StatusItem>
    <StatusItem $mr={30}><Glyph w={15} h={15}><path d="M1 14 L2 9.5 L9 2.5 L12.5 6 L5.5 13Z M10 1.5 L11.5 0 L15 3.5 L13.5 5Z" fill="#d6d6d6" /></Glyph>0</StatusItem>
    <StatusItem $mr={36}><Glyph w={17} h={18}><g stroke="#ddd" strokeWidth="1.3"><circle cx="4" cy="3" r="2.2" /><circle cx="4" cy="15" r="2.2" /><circle cx="13" cy="5" r="2.2" /><path d="M4 5.5 V12.5 M13 7.5 C13 10.5 5 9 4 12" /></g></Glyph>3-fa-en-qa<Caret c="#fafafa" up /></StatusItem>
    <StatusItem $mr={28}><Glyph w={18} h={18}><path d="M9 0 L18 9 L9 18 L0 9Z" fill="#d6d6d6" /><path d="M7 3.5 V14 M7.5 6 L12 10" stroke="#424242" strokeWidth="1.3" /><circle cx="7.5" cy="13" r="1.6" fill="#424242" /><circle cx="12" cy="10" r="1.6" fill="#424242" /></Glyph>Laptopkaran<Caret c="#fafafa" up /></StatusItem>
    <Bell aria-label="Notifications"><Glyph w={18} h={19}><path d="M1.5 15 H16 L14.5 12 V7 C14.5 -0.5 4 -0.5 4 7 V12Z M7 16 Q9 19 11 16" stroke="#e5cf94" strokeWidth="1.4" /></Glyph><span>1</span></Bell>
  </Status>
);

/* ---------- taskbar ---------- */

const TaskBar = styled.nav`
  flex: none;
  display: grid;
  grid-template-columns: 1fr auto 1fr;
  align-items: center;
  height: 60px;
  background: linear-gradient(90deg, #232323, #202423 50%, #242323);
`;
const Apps = styled.div`
  grid-column: 2;
  display: flex;
  gap: 5px;
`;
const AppButton = styled.button<{ $on?: boolean; $run?: boolean }>`
  position: relative;
  display: flex;
  align-items: center;
  justify-content: center;
  width: 50px;
  height: 50px;
  border-radius: 5px;
  border: 1px solid ${(p) => (p.$on ? '#3b3b3b' : 'transparent')};
  background: ${(p) => (p.$on ? '#303030' : 'none')};
  ${(p) => (p.$on || p.$run) && css`
    &::after { content: ''; position: absolute; bottom: 0; width: ${p.$on ? 20 : 7}px; height: 4px; border-radius: 2px; background: ${p.$on ? '#dba0e8' : '#969696'}; }
  `}
`;
const Tray = styled.div`
  display: flex;
  align-items: center;
  justify-content: flex-end;
  gap: 11px;
  padding-right: 25px;
  color: #fafafa;
`;
const Lang = styled.button`margin-right: 11px;`;
const Clock = styled.div`
  margin: 0 3px 0 12px;
  text-align: right;
  line-height: 20px;
`;
const Bubble = styled.button`
  width: 20px;
  height: 20px;
  border-radius: 50%;
  background: #dba0e8;
  color: #222;
  font-size: 12px;
  line-height: 20px;
`;

const APPS: { n: string; run?: boolean; on?: boolean; art: React.ReactNode }[] = [
  { n: 'Start', art: <><defs><linearGradient id="win" x1="0" y1="0" x2="1" y2="1"><stop stopColor="#7fe0ff" /><stop offset="1" stopColor="#1296ff" /></linearGradient></defs><path d="M0 0 H14.3 V14.3 H0Z M15.7 0 H30 V14.3 H15.7Z M0 15.7 H14.3 V30 H0Z M15.7 15.7 H30 V30 H15.7Z" fill="url(#win)" /></> },
  { n: 'Search', art: <><circle cx="16" cy="13" r="11" fill="#444" stroke="#e6e6e6" strokeWidth="2.4" /><path d="M9 21 L2 28" stroke="#e6e6e6" strokeWidth="3" strokeLinecap="round" /></> },
  { n: 'Task view', art: <><rect x="0" y="8" width="22" height="21" rx="1.5" fill="#5c5c5c" /><rect x="7" y="1" width="23" height="20" rx="1.5" fill="#e2e2e2" /><path d="M7 8 H22 V21 H7Z" fill="#a4a4a4" /></> },
  { n: 'Microsoft Store', art: <><path d="M8 8 V1.5 H22 V8" stroke="#e8e8e8" strokeWidth="2.2" /><rect x="0.5" y="7" width="29" height="23" rx="1.5" fill="#f4f4f4" /><path d="M9 14 H14.5 V19.5 H9Z" fill="#f25022" /><path d="M15.5 14 H21 V19.5 H15.5Z" fill="#7fba00" /><path d="M9 20.5 H14.5 V26 H9Z" fill="#00a4ef" /><path d="M15.5 20.5 H21 V26 H15.5Z" fill="#ffb900" /></> },
  { n: 'Armoury', art: <><path d="M15 2 L27 8 V21 L15 29 L3 21 V8Z" fill="#4d525a" /><path d="M15 2 L27 8 L25 20 L17 3Z" fill="#7d838c" /><path d="M3 21 L15 29 L27 21 L21 19Z" fill="#3c4047" /><path d="M16 9 L21 20 L9 21Z" fill="#1d2023" /><path d="M4 21 L16 4 L20 15 L16 9 L10 20Z" fill="#a5abb4" /></> },
  { n: 'Opera', art: <><path fillRule="evenodd" d="M15 1 A14.3 14.3 0 1 0 15 29.5 A14.3 14.3 0 1 0 15 1Z M15 5 C19 5 21 10 21 15.2 C21 20.5 19 25.5 15 25.5 C11 25.5 9 20.5 9 15.2 C9 10 11 5 15 5Z" fill="#f5142a" /><path d="M18 2 C33 5 33 25 18 28.500 C24 24 24 7 18 2Z" fill="#ff4b4b" /></> },
  { n: 'Camera', art: <><defs><radialGradient id="lens"><stop stopColor="#ff5a2a" /><stop offset=".35" stopColor="#e03a20" /><stop offset=".5" stopColor="#7c5ae0" /><stop offset=".8" stopColor="#4a3c9c" /><stop offset="1" stopColor="#241f3c" /></radialGradient></defs><circle cx="15" cy="15" r="14" fill="#222429" stroke="#44474c" strokeWidth="1.5" /><circle cx="15" cy="15" r="11" fill="url(#lens)" /><path d="M8 9 Q15 2 22 9 Q15 7 8 9Z" fill="#b0c0f8" /><path d="M6 17 Q8 25 15 25 Q9 22 6 17Z" fill="#35b4e0" /></> },
  { n: 'Lock', art: <><path d="M2 28 V14 H5.5 C5.5 -3 24.5 -3 24.5 14 H28 V28Z" fill="#000" stroke="#eee" strokeWidth="1.5" /><path d="M9.5 14 C9.5 3.5 20.5 3.5 20.5 14" stroke="#fff" strokeWidth="2.5" /><path d="M5 15 H25 V25.5 H5Z" fill="#fff" /></> },
  { n: 'XAMPP', art: <><rect width="30" height="30" rx="3" fill="#f47a24" /><path d="M9 7.5 C4 7.5 4 13 8 15 C4 17 4 23 9 23 C12 23 13 21 13 18.5 H17 C17 21 18 23 21 23 C26 23 26 17 22 15 C26 13 26 7.5 21 7.5 C18 7.5 17 9 17 11.5 H13 C13 9 12 7.5 9 7.5Z" stroke="#fff" strokeWidth="3.6" /></> },
  { n: 'File Explorer', run: true, art: <><path d="M0 5 Q0 2 2 2 H11 L14 6 H28 V12 H0Z" fill="#dfa206" /><rect y="7" width="30" height="21" rx="1.5" fill="#ffcc44" /><path d="M5 28 V22 Q5 20 7 20 H23 Q25 20 25 22 V28Z" fill="#1274c8" /><path d="M9 24 H21" stroke="#064f92" strokeWidth="1.6" /></> },
  { n: 'Chrome', run: true, art: <><circle cx="15" cy="15" r="14.5" fill="#34a853" /><path d="M15 15 L2.4 7.8 A14.5 14.5 0 0 1 27.6 7.8 H15Z" fill="#ea4335" /><path d="M15 7.8 H27.6 A14.5 14.5 0 0 1 15 29.5 L21.5 18.5Z" fill="#fbbc05" /><circle cx="15" cy="15" r="7" fill="#fff" /><circle cx="15" cy="15" r="5.5" fill="#4285f4" /></> },
  { n: 'Visual Studio', on: true, art: <><path d="M0 7 L4 5 L25 24 L21 29.5 L3 12.5 V18 L0 23Z" fill="#7a54c4" /><path d="M0 23 L21 0.5 L24 9 L4 25Z" fill="#9b6ee0" /><path d="M21 0.5 L30 4 V26 L21 29.5 L22 20 V9Z" fill="#c99af8" /></> },
  { n: 'Firefox', art: <><path d="M15 29 C4 29 0 20 2 12 C3 9 4 7 5 5 L8 8 C11 6 12 8 14 8 L16 3 L18 0 C21 4 28 8 28 16 C28 24 22 29 15 29Z" fill="#ff5a35" /><path d="M18 0 C21 4 28 8 28 16 C28 21 25 25 22 26 C26 17 18 15 18 8Z" fill="#ffcf3f" /><circle cx="14" cy="14" r="6" fill="#7a4ae8" /><path d="M2 16 C4 24 12 25 17 21 C14 30 3 27 2 16Z" fill="#f52c6d" /><path d="M5 10 Q10 8 15 12 L9 14Z" fill="#ffa436" /></> },
  { n: 'Edge', art: <><path d="M15 0.5 A14.5 14.5 0 0 0 12 29 C20 31 26 27 27 23 C21 27 13 23 13 17 C13 14 15 13 16 13 Z" fill="#1a78d0" /><path d="M1 13 C3 -4 29 -3 29.5 13 C29.5 18 24 20 19 18 C21 15 18 9 12 9 C7 9 3 11 1 13Z" fill="#35c4c4" /><path d="M20 2 C32 6 31 19 22 18.5 Q18 18 19 17 C22 11 17 8 12 8Z" fill="#5ad06c" /><path d="M12 29 C5 25 7 16 13 14 C12 21 19 27 27 23 C23 29 17 30.5 12 29Z" fill="#0c4f9e" /></> },
  { n: 'Terminal', run: true, art: <><rect y="4" width="30" height="22" rx="1.5" fill="#474747" /><path d="M0 4 H30 V8 H0Z" fill="#8c8c8c" /><path d="M0 4 H10 V8 H0Z" fill="#c6c6c6" /><path d="M5 12 L10 17 L5 22 M13 22 H22" stroke="#eee" strokeWidth="2.6" /></> },
];

const Tasks = () => (
  <TaskBar>
    <Apps>
      {APPS.map((a) => <AppButton key={a.n} $on={a.on} $run={a.run} aria-label={a.n}><Glyph w={30}>{a.art}</Glyph></AppButton>)}
    </Apps>
    <Tray>
      <Tool $w={28} aria-label="Hidden icons"><Glyph w={16} h={9}><path d="M1 8 L8 1 L15 8" stroke="#eee" strokeWidth="1.4" /></Glyph></Tool>
      <Lang>ENG</Lang>
      <Glyph w={20} h={16}><path d="M1 6 Q10 -3 19 6 M4 9 Q10 3 16 9 M7 12 Q10 9 13 12" stroke="#fff" strokeWidth="1.5" /><circle cx="10" cy="14" r="1.5" fill="#fff" /></Glyph>
      <Glyph w={19} h={16}><path d="M1 5.5 H4 L9 1 V15 L4 10.5 H1Z M11.5 5 Q13.5 8 11.5 11 M14 3 Q17 8 14 13" stroke="#fff" strokeWidth="1.4" /><path d="M16.5 1 Q20.5 8 16.5 15" stroke="#777" strokeWidth="1.4" /></Glyph>
      <Glyph w={20} h={16}><path d="M8 3.5 H17 V13.5 H5 V9 M18.5 7 V10" stroke="#fff" strokeWidth="1.5" /><path d="M0.5 3 H7.5 V6 L5 9 H3 L0.5 6Z M2 0 V3 M6 0 V3" fill="#fff" stroke="#fff" /><path d="M9 6 H12 V11.500 H8Z" fill="#fff" /></Glyph>
      <Clock>5:36 AM<br />6/29/2025</Clock>
      <Bubble>1</Bubble>
    </Tray>
  </TaskBar>
);

export default function App() {
  return (
    <Page>
      <GlobalStyle />
      <Title />
      <MainToolbar />
      <Workspace>
        <ReportData />
        <Splitter />
        <Center>
          <Documents />
          <Splitter $flat={9} />
          <Output />
        </Center>
        <Splitter />
        <Right />
      </Workspace>
      <StatusBar />
      <Tasks />
    </Page>
  );
}
